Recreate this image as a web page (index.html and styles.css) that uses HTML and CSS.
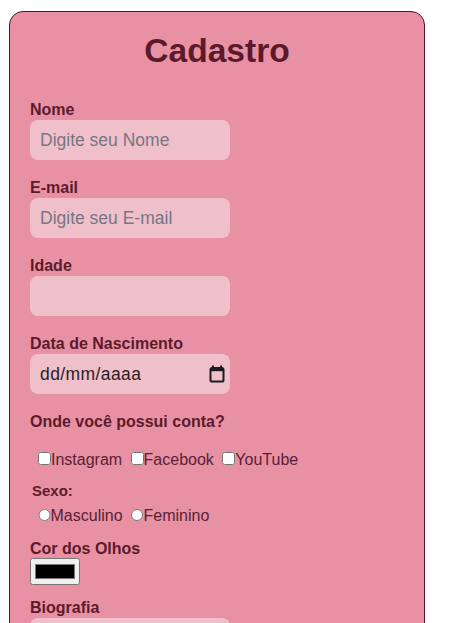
FILE: index.html
```html
<!DOCTYPE html>
<html lang="pt-BR">
<head>
<meta charset="utf-8">
<title>Cadastro</title>
<link rel="stylesheet" href="styles.css">
</head>
<body>
<form class="card">
  <h1 class="title">Cadastro</h1>

  <div class="field">
    <label class="label" for="nome">Nome</label>
    <input class="input" id="nome" type="text" placeholder="Digite seu Nome">
  </div>

  <div class="field">
    <label class="label" for="email">E-mail</label>
    <input class="input" id="email" type="text" placeholder="Digite seu E-mail">
  </div>

  <div class="field">
    <label class="label" for="idade">Idade</label>
    <input class="input" id="idade" type="text">
  </div>

  <div class="field">
    <label class="label">Data de Nascimento</label>
    <div class="input date">
      <span class="date-text">dd/mm/aaaa</span>
      <svg class="cal" width="16" height="18" viewBox="0 0 16 18" aria-hidden="true">
        <rect x="3" y="0.5" width="2" height="3" fill="#1c1a1f"/>
        <rect x="11" y="0.5" width="2" height="3" fill="#1c1a1f"/>
        <rect x="1.5" y="3" width="13" height="13.5" rx="1.6" fill="none" stroke="#1c1a1f" stroke-width="2"/>
        <rect x="1.5" y="3" width="13" height="3.2" fill="#1c1a1f"/>
      </svg>
    </div>
  </div>

  <div class="group">
    <span class="label">Onde você possui conta?</span>
    <div class="options checks">
      <label class="opt"><input class="check" type="checkbox">Instagram</label>
      <label class="opt"><input class="check" type="checkbox">Facebook</label>
      <label class="opt"><input class="check" type="checkbox">YouTube</label>
    </div>
  </div>

  <div class="group sex">
    <span class="label small">Sexo:</span>
    <div class="options radios">
      <label class="opt"><input class="radio" type="radio" name="sexo">Masculino</label>
      <label class="opt"><input class="radio" type="radio" name="sexo">Feminino</label>
    </div>
  </div>

  <div class="field eyes">
    <label class="label" for="olhos">Cor dos Olhos</label>
    <input class="color" id="olhos" type="color" value="#000000">
  </div>

  <div class="field">
    <label class="label" for="bio">Biografia</label>
    <textarea class="input bio" id="bio"></textarea>
  </div>

  <button class="btn" type="button">Enviar</button>
</form>
</body>
</html>
```
FILE: styles.css
```css
html, body {
  margin: 0;
  padding: 0;
  background: #ffffff;
}

body {
  font-family: "Liberation Sans", Arial, sans-serif;
  padding: 11px 0 40px 9px;
}

.card {
  box-sizing: border-box;
  width: 416px;
  background: #e891a4;
  border: 1px solid #4e1626;
  border-radius: 14px;
  padding: 19.5px 20px 30px;
  color: #5c1b2c;
}

.title {
  margin: 0 0 31.5px;
  font-size: 33.6px;
  font-weight: bold;
  text-align: center;
  color: #5a1a2b;
  line-height: normal;
}

.field {
  margin-bottom: 19px;
}

.label {
  display: block;
  font-size: 16px;
  font-weight: bold;
  color: #5c1b2c;
  line-height: normal;
}

.label.small {
  font-size: 15px;
  padding-left: 2px;
}

.input {
  box-sizing: border-box;
  display: block;
  width: 200px;
  height: 40px;
  margin-top: 1px;
  padding: 0 10px;
  border: none;
  border-radius: 8px;
  background: #f0c0ca;
  font-family: "Liberation Sans", Arial, sans-serif;
  font-size: 17.5px;
  color: #2a1d26;
  outline: none;
}

.input::placeholder {
  color: #767684;
}

.date {
  display: flex;
  align-items: center;
  justify-content: space-between;
  padding: 0 5px 0 10px;
}

.date-text {
  color: #2a1d26;
  letter-spacing: 0.4px;
}

.cal {
  display: block;
}

.group {
  margin-bottom: 13px;
}

.group.sex {
  margin-bottom: 15px;
}

.options {
  font-size: 16px;
  color: #5a1f36;
  line-height: normal;
}

.checks {
  margin-top: 20px;
  padding-left: 4px;
}

.radios {
  margin-top: 8px;
  padding-left: 4px;
}

.opt {
  white-space: nowrap;
}

.check {
  margin: 0 0 3px 4px;
  width: 13px;
  height: 13px;
  vertical-align: baseline;
}

.radio {
  margin: 0 0 3px 4px;
  width: 12.5px;
  height: 12.5px;
  vertical-align: baseline;
}

.color {
  display: block;
  box-sizing: border-box;
  width: 50px;
  height: 27px;
  margin: 0;
}

.field.eyes {
  margin-bottom: 14px;
}

.bio {
  height: 80px;
  padding: 8px 10px;
  resize: none;
}

.btn {
  font-family: "Liberation Sans", Arial, sans-serif;
}
```
